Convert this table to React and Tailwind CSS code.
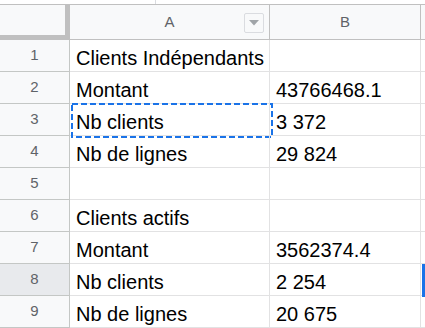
import React from 'react';

const rows = [
  { n: 1, a: 'Clients Indépendants', b: '' },
  { n: 2, a: 'Montant', b: '43766468.1' },
  { n: 3, a: 'Nb clients', b: '3 372', copied: true },
  { n: 4, a: 'Nb de lignes', b: '29 824' },
  { n: 5, a: '', b: '' },
  { n: 6, a: 'Clients actifs', b: '' },
  { n: 7, a: 'Montant', b: '3562374.4' },
  { n: 8, a: 'Nb clients', b: '2 254', active: true },
  { n: 9, a: 'Nb de lignes', b: '20 675' },
];

const CopyMarquee = () => (
  <svg
    className="absolute left-[1px] top-[-1px] pointer-events-none"
    width="202"
    height="35"
    viewBox="0 0 202 35"
  >
    <rect x="1" y="1" width="200" height="33" fill="none" stroke="#1a73e8" strokeWidth="2" strokeDasharray="6 3" />
  </svg>
);

const Row = ({ row }) => (
  <div className="flex h-[32px]">
    <div
      className={`w-[70px] shrink-0 flex items-center justify-center border-r border-b border-[#c4c7c5] text-[15px] text-[#5f6368] ${
        row.active ? 'bg-[#e8eaed]' : 'bg-[#f8f9fa]'
      }`}
    >
      {row.n}
    </div>
    <div className="relative w-[200px] shrink-0 flex items-end pb-px pl-[6px] border-r border-b border-[#e2e2e3] text-[20px] leading-[23px] text-black whitespace-nowrap">
      {row.a}
      {row.copied && <CopyMarquee />}
    </div>
    <div className="w-[151px] shrink-0 flex items-end pb-px pl-[6px] border-r border-b border-[#e2e2e3] text-[20px] leading-[23px] text-black whitespace-nowrap">
      {row.b}
    </div>
    <div className="flex-1 border-b border-[#e2e2e3]">
      {row.active && <div className="ml-px w-[3px] h-[33px] bg-[#1a73e8]" />}
    </div>
  </div>
);

export default function App() {
  return (
    <div className="w-[425px] h-[328px] overflow-hidden bg-white font-['Liberation_Sans',Arial,sans-serif]">
      <div className="flex h-[4px]">
        <div className="ml-[155px] w-px bg-[#dadce0]" />
      </div>

      {/* column headers */}
      <div className="flex h-[36px] border-t border-[#c0c0c0] bg-[#f8f9fa]">
        <div className="w-[70px] shrink-0 border-r-[5px] border-b-[5px] border-[#c0c0c0]" />
        <div className="relative w-[200px] shrink-0 flex items-center justify-center border-r border-b border-[#c0c0c0] text-[15px] text-[#5f6368]">
          A
          <div className="absolute right-[5px] top-[8px] w-[20px] h-[20px] flex items-center justify-center border border-[#dadce0] rounded-[2px] bg-[#f8f9fa]">
            <svg width="10" height="6" viewBox="0 0 10 6">
              <path d="M0 0h10L5 5.5z" fill="#a0a4a8" />
            </svg>
          </div>
        </div>
        <div className="w-[151px] shrink-0 flex items-center justify-center border-r border-b border-[#c0c0c0] text-[15px] text-[#5f6368]">
          B
        </div>
        <div className="flex-1 border-b border-[#c0c0c0]" />
      </div>

      {rows.map((r) => (
        <Row key={r.n} row={r} />
      ))}
    </div>
  );
}
